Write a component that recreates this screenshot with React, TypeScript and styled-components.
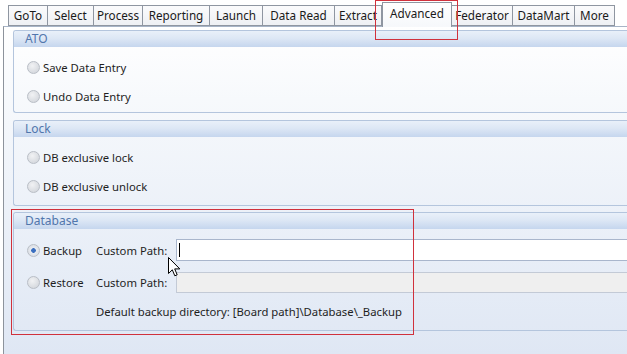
import React from "react";
import styled, { createGlobalStyle } from "styled-components";

const GlobalStyle = createGlobalStyle`
  html, body {
    margin: 0;
    padding: 0;
    background: #ffffff;
    overflow: hidden;
  }
  body {
    font-family: "Segoe UI", "Noto Sans", sans-serif;
    font-size: 11.3px;
    color: #1e1e1e;
  }
`;

const Page = styled.div`
  position: relative;
  width: 680px;
  height: 354px;
  padding-left: 3px;
  display: flex;
  flex-direction: column;
`;

const TabStrip = styled.div`
  display: flex;
  align-items: flex-end;
  height: 26px;
  padding-left: 5px;
  position: relative;
  z-index: 1;
`;

const Tab = styled.div<{ $active?: boolean; $w: number }>`
  box-sizing: border-box;
  width: ${(p) => p.$w}px;
  height: ${(p) => (p.$active ? "25px" : "21px")};
  margin-bottom: ${(p) => (p.$active ? "-1px" : "0")};
  padding-top: ${(p) => (p.$active ? "2px" : "1px")};
  border: 1px solid #8f96a1;
  border-bottom: ${(p) => (p.$active ? "none" : "1px solid #8f96a1")};
  border-left-width: ${(p) => (p.$active ? "1px" : "0")};
  background: ${(p) =>
    p.$active
      ? "linear-gradient(#ffffff, #f6f8fb)"
      : "linear-gradient(#fbfbfc 0%, #eef0f4 100%)"};
  color: #1a1a1a;
  font-size: 11.7px;
  line-height: 17px;
  text-align: center;
  white-space: nowrap;

  &:first-child {
    border-left-width: 1px;
  }
`;

const Panel = styled.div`
  flex: 1;
  border-left: 1px solid #8d939c;
  border-top: 1px solid #a7b4c7;
  background: linear-gradient(#ffffff 0%, #f4f7fb 30%, #dfe7f4 100%);
  padding: 3px 0 0 9px;
`;

const Group = styled.section<{ $mb?: number }>`
  border: 1px solid #b4c5dd;
  border-right: none;
  border-radius: 3px 0 0 3px;
  margin-bottom: ${(p) => p.$mb ?? 7}px;
  overflow: hidden;
`;

const GroupHeader = styled.div`
  height: 16px;
  line-height: 15px;
  padding-left: 11px;
  background: linear-gradient(#e9f0f9 0%, #dde7f5 45%, #c5d6ee 100%);
  color: #5176ac;
  font-size: 12px;
`;

const GroupBody = styled.div<{ $pb: number }>`
  display: flex;
  flex-direction: column;
  gap: 7px;
  padding: 9px 0 ${(p) => p.$pb}px 13px;
`;

const RadioRow = styled.label`
  display: flex;
  align-items: center;
  height: 22px;
  gap: 3px;
`;

const RadioDot = styled.span<{ $checked?: boolean }>`
  box-sizing: border-box;
  width: 13px;
  height: 13px;
  border-radius: 50%;
  border: 1px solid #b9bec6;
  background: ${(p) =>
    p.$checked
      ? "radial-gradient(circle, #3b6fc0 0 2px, #e8ebf0 2.6px, #d3d7de 100%)"
      : "radial-gradient(circle at 40% 35%, #f1f2f4 0%, #d8dbe0 70%, #c9cdd4 100%)"};
  flex-shrink: 0;
`;

const DbGrid = styled.div`
  display: grid;
  grid-template-columns: 69px 80px 1fr;
  grid-template-rows: 22px 21px 18px;
  row-gap: 11px;
  align-items: center;
  padding: 10px 0 8px 13px;

  & > :nth-child(7) {
    margin-top: -2px;
  }
`;

const FieldLabel = styled.span`
  white-space: nowrap;
`;

const PathInput = styled.div<{ $disabled?: boolean }>`
  box-sizing: border-box;
  height: ${(p) => (p.$disabled ? "21px" : "22px")};
  border: 1px solid ${(p) => (p.$disabled ? "#c3cad6" : "#a9b6cc")};
  background: ${(p) => (p.$disabled ? "#efefef" : "#ffffff")};
  position: relative;
`;

const Caret = styled.span`
  position: absolute;
  left: 2px;
  top: 3px;
  width: 1px;
  height: 14px;
  background: #000;
`;

const Note = styled.div`
  grid-column: 2 / 4;
  height: 18px;
  line-height: 18px;
  white-space: nowrap;
`;

const Highlight = styled.div<{ $x: number; $y: number; $w: number; $h: number }>`
  position: absolute;
  left: ${(p) => p.$x}px;
  top: ${(p) => p.$y}px;
  width: ${(p) => p.$w}px;
  height: ${(p) => p.$h}px;
  box-sizing: border-box;
  border: 1px solid #d0313c;
  pointer-events: none;
  z-index: 5;
`;

const Cursor = styled.svg`
  position: absolute;
  left: 168px;
  top: 257px;
  z-index: 6;
`;

const tabs: [string, number][] = [
  ["GoTo", 40],
  ["Select", 46],
  ["Process", 49],
  ["Reporting", 67],
  ["Launch", 53],
  ["Data Read", 72],
  ["Extract", 47],
  ["Advanced", 70],
  ["Federator", 61],
  ["DataMart", 62],
  ["More", 40],
];

const Radio = ({ label, checked }: { label: string; checked?: boolean }) => (
  <RadioRow>
    <RadioDot $checked={checked} />
    <span>{label}</span>
  </RadioRow>
);

export default function App() {
  return (
    <>
      <GlobalStyle />
      <Page>
        <TabStrip>
          {tabs.map(([t, w]) => (
            <Tab key={t} $w={w} $active={t === "Advanced"}>
              {t}
            </Tab>
          ))}
        </TabStrip>
        <Panel>
          <Group $mb={7}>
            <GroupHeader>ATO</GroupHeader>
            <GroupBody $pb={5}>
              <Radio label="Save Data Entry" />
              <Radio label="Undo Data Entry" />
            </GroupBody>
          </Group>
          <Group $mb={6}>
            <GroupHeader>Lock</GroupHeader>
            <GroupBody $pb={8}>
              <Radio label="DB exclusive lock" />
              <Radio label="DB exclusive unlock" />
            </GroupBody>
          </Group>
          <Group>
            <GroupHeader>Database</GroupHeader>
            <DbGrid>
              <Radio label="Backup" checked />
              <FieldLabel>Custom Path:</FieldLabel>
              <PathInput>
                <Caret />
              </PathInput>
              <Radio label="Restore" />
              <FieldLabel>Custom Path:</FieldLabel>
              <PathInput $disabled />
              <Note>Default backup directory: [Board path]\Database\_Backup</Note>
            </DbGrid>
          </Group>
        </Panel>
        <Highlight $x={375} $y={0} $w={83} $h={40} />
        <Highlight $x={11} $y={209} $w={403} $h={126} />
        <Cursor width="13" height="21" viewBox="0 0 13 21">
          <path
            d="M0.5 0.5 L0.5 16.5 L4.3 12.8 L6.8 18.8 L9.2 17.8 L6.7 11.9 L11.8 11.9 Z"
            fill="#fff"
            stroke="#000"
            strokeWidth="1"
            strokeLinejoin="miter"
          />
        </Cursor>
      </Page>
    </>
  );
}
